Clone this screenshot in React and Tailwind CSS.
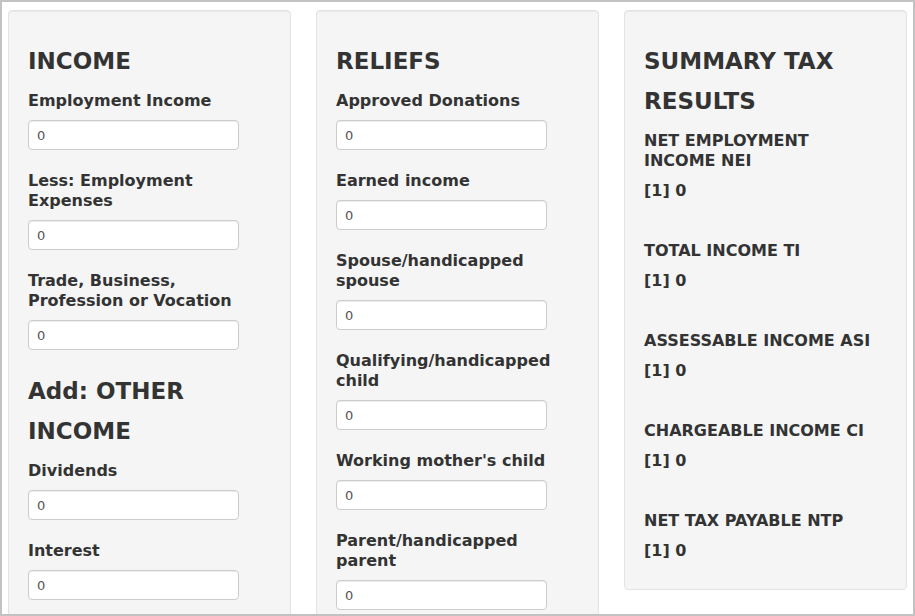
import React from "react";

const incomeFields = [
  "Employment Income",
  "Less: Employment Expenses",
  "Trade, Business, Profession or Vocation",
];

const otherIncome = ["Dividends", "Interest"];

const reliefs = [
  "Approved Donations",
  "Earned income",
  "Spouse/handicapped spouse",
  "Qualifying/handicapped child",
  "Working mother's child",
  "Parent/handicapped parent",
];

const results = [
  "NET EMPLOYMENT INCOME NEI",
  "TOTAL INCOME TI",
  "ASSESSABLE INCOME ASI",
  "CHARGEABLE INCOME CI",
  "NET TAX PAYABLE NTP",
];

const Field = ({ label }) => (
  <div className="mb-[21px]">
    <label className="block mb-[9px] text-[16px] leading-[20px] font-bold">{label}</label>
    <input
      type="text"
      defaultValue="0"
      className="block w-[211px] h-[30px] px-[8px] bg-white border border-[#cccccc] rounded-[4px] text-[13px] text-[#555] outline-none shadow-[inset_0_1px_1px_rgba(0,0,0,0.075)]"
    />
  </div>
);

const Heading = ({ children, first }) => (
  <h3 className={`${first ? "mt-[11px]" : "mt-0"} mb-[10px] text-[23px] leading-[40px] font-bold`}>
    {children}
  </h3>
);

const Panel = ({ children, className = "" }) => (
  <div
    className={`w-[283px] shrink-0 bg-[#f5f5f5] border border-[#e3e3e3] rounded-[4px] px-[19px] pt-[19px] shadow-[inset_0_1px_1px_rgba(0,0,0,0.05)] ${className}`}
  >
    {children}
  </div>
);

export default function App() {
  return (
    <div
      className="w-[915px] h-[616px] border-2 border-[#c2c2c2] overflow-hidden bg-white text-[#333]"
      style={{ fontFamily: '"DejaVu Sans", Tahoma, sans-serif' }}
    >
      <div className="flex items-start gap-[25px] pl-[6px] pt-[8px]">
        <Panel className="pb-[40px]">
          <Heading first>INCOME</Heading>
          {incomeFields.map((f) => (
            <Field key={f} label={f} />
          ))}
          <Heading>Add: OTHER INCOME</Heading>
          {otherIncome.map((f) => (
            <Field key={f} label={f} />
          ))}
        </Panel>

        <Panel className="pb-[40px]">
          <Heading first>RELIEFS</Heading>
          {reliefs.map((f) => (
            <Field key={f} label={f} />
          ))}
        </Panel>

        <Panel className="pb-[19px]">
          <Heading first>SUMMARY TAX RESULTS</Heading>
          <div className="flex flex-col gap-[40px]">
            {results.map((r) => (
              <div key={r} className="flex flex-col gap-[10px]">
                <div className="w-[232px] text-[16px] leading-[20px] font-bold">{r}</div>
                <div className="text-[16px] leading-[20px] font-bold">[1] 0</div>
              </div>
            ))}
          </div>
          <div className="h-[9px]" />
        </Panel>
      </div>
    </div>
  );
}
